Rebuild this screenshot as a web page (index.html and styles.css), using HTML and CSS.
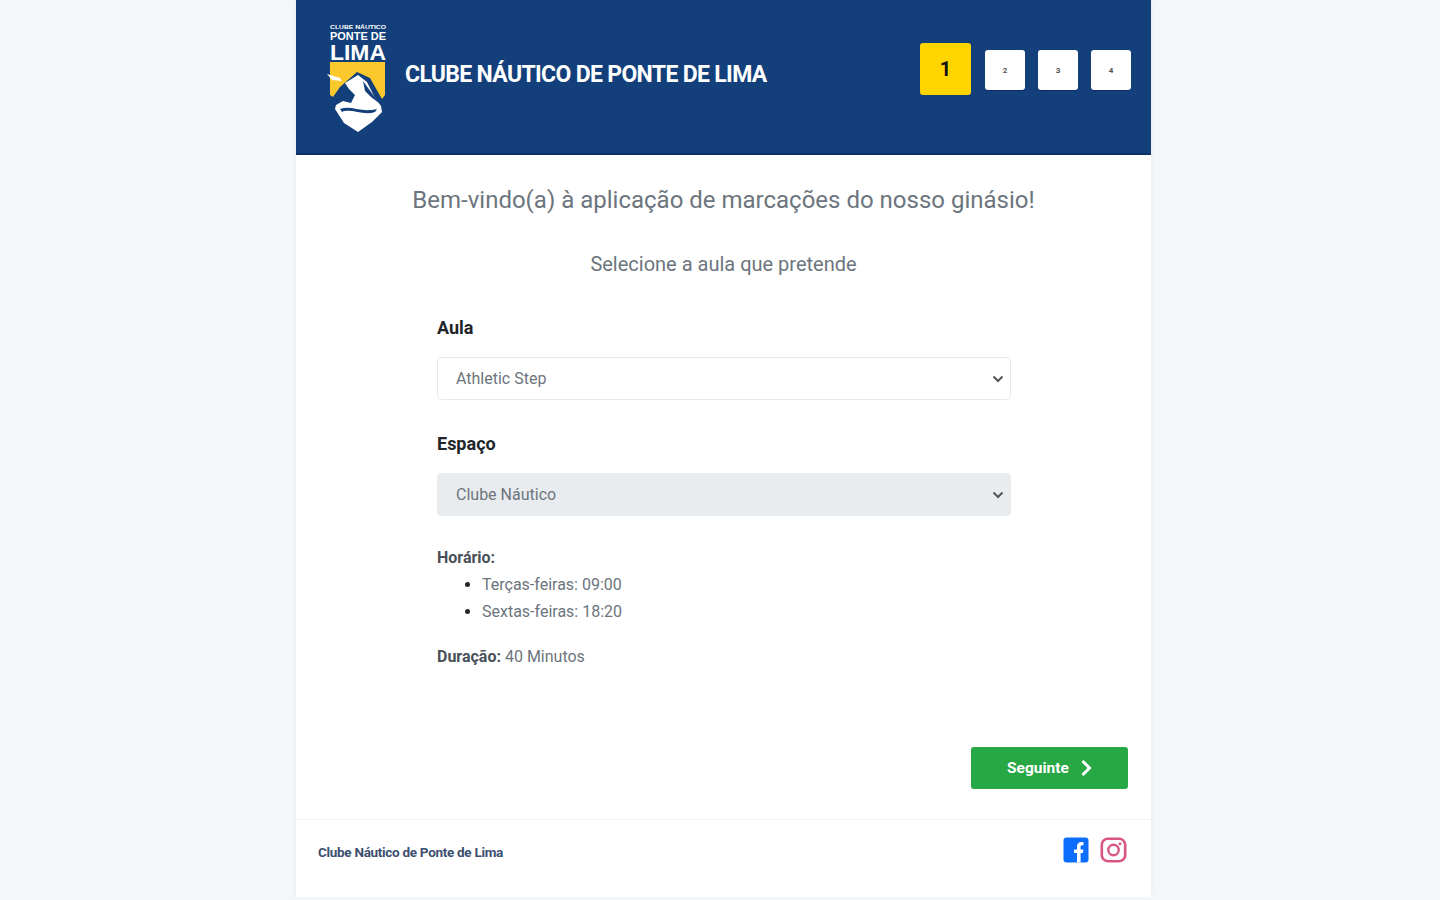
FILE: index.html
```html
<!DOCTYPE html>
<html lang="pt">
<head>
    <meta charset="UTF-8">
    <meta name="viewport" content="width=device-width, initial-scale=1.0">
    <title>Clube Náutico de Ponte de Lima</title>
    <link rel="stylesheet" href="styles.css">
</head>
<body>
    <div class="card">
        <header class="top">
            <div class="brand">
                <svg class="logo" width="64" height="112" viewBox="0 0 64 112">
                    <text x="31" y="8" class="logo-small" textLength="56" lengthAdjust="spacingAndGlyphs">CLUBE NÁUTICO</text>
                    <text x="31" y="19" class="logo-mid" textLength="56" lengthAdjust="spacingAndGlyphs">PONTE DE</text>
                    <text x="31" y="39" class="logo-big" textLength="56" lengthAdjust="spacingAndGlyphs">LIMA</text>
                    <path d="M3 41H58V74L55 78 43 57 30 51 13 66 6 76 3 74Z" fill="#fcc92c"/>
                    <path d="M0 53L13 57 15 60 5 59Z" fill="#fff"/>
                    <path d="M18 62L31 54 40 61 48 77 54 85 55 91 45 101 31 111 17 102 8 88 9 84 16 80 24 82 28 74 22 68Z" fill="#fff"/>
                    <path d="M36 60L44 71 52 82 44 76 38 70Z" fill="#133f7b"/>
                    <path d="M13 88C24 84 34 92 50 88L48 91C36 95 24 87 15 91Z" fill="#133f7b"/>
                </svg>
                <h1 class="club-name">CLUBE NÁUTICO DE PONTE DE LIMA</h1>
            </div>
            <div class="steps">
                <div class="step active">1</div>
                <div class="step">2</div>
                <div class="step">3</div>
                <div class="step">4</div>
            </div>
        </header>

        <main class="content">
            <h2 class="welcome">Bem-vindo(a) à aplicação de marcações do nosso ginásio!</h2>
            <p class="pick">Selecione a aula que pretende</p>

            <form class="booking">
                <label for="aula">Aula</label>
                <select id="aula">
                    <option>Athletic Step</option>
                </select>

                <label for="espaco">Espaço</label>
                <select id="espaco" disabled>
                    <option>Clube Náutico</option>
                </select>

                <div class="info">
                    <strong>Horário:</strong>
                    <ul>
                        <li>Terças-feiras: 09:00</li>
                        <li>Sextas-feiras: 18:20</li>
                    </ul>
                    <p><strong>Duração:</strong> 40 Minutos</p>
                </div>
            </form>

            <div class="actions">
                <button type="button" class="next">
                    Seguinte
                    <svg width="12" height="18" viewBox="0 0 12 18"><path d="M2.5 2L9.5 9 2.5 16" fill="none" stroke="#fff" stroke-width="3"/></svg>
                </button>
            </div>
        </main>

        <footer class="bottom">
            <span class="foot-name">Clube Náutico de Ponte de Lima</span>
            <div class="social">
                <svg width="26" height="26" viewBox="0 0 26 26">
                    <rect x="0.5" y="0.5" width="25" height="25" rx="3" fill="#0d6efd"/>
                    <path d="M14 25.5V16H11V12.5H14V9.5C14 6.5 16 5 18.2 5C19.4 5 20.5 5.2 20.5 5.2V8.2H19C17.8 8.2 17.6 9 17.6 9.8V12.5H20.4L19.9 16H17.6V25.5Z" fill="#fff"/>
                </svg>
                <svg width="27" height="26" viewBox="0 0 27 26">
                    <rect x="1.8" y="1.8" width="23.4" height="22.4" rx="6" fill="none" stroke="#d9567f" stroke-width="2.6"/>
                    <circle cx="13.5" cy="13" r="5.2" fill="none" stroke="#d9567f" stroke-width="2.4"/>
                    <circle cx="20" cy="6.8" r="1.5" fill="#d9567f"/>
                </svg>
            </div>
        </footer>
    </div>
</body>
</html>
```

FILE: styles.css
```css
body {
    margin: 0;
    background-color: #f4f7f9;
    font-family: Roboto, "Liberation Sans", sans-serif;
    color: #212529;
}
.card {
    width: 855px;
    height: 897px;
    margin: 0 0 0 296px;
    background-color: white;
    box-shadow: 0 0 3px rgba(0, 0, 0, 0.08);
    display: flex;
    flex-direction: column;
}
.top {
    height: 153px;
    flex: none;
    background-color: #133f7b;
    border-bottom: 2px solid #0c2f6b;
    display: flex;
    justify-content: space-between;
    padding: 0 20px 0 31px;
}
.brand {
    display: flex;
    align-items: center;
    gap: 14px;
}
.logo {
    margin-top: 21px;
    align-self: flex-start;
}
.logo text {
    fill: white;
    font-family: "Liberation Sans", sans-serif;
    font-weight: bold;
    text-anchor: middle;
}
.logo-small {
    font-size: 6px;
}
.logo-mid {
    font-size: 11px;
}
.logo-big {
    font-size: 22px;
}
.club-name {
    margin: 0 0 4px;
    font-size: 23px;
    font-weight: 700;
    letter-spacing: -0.67px;
    color: white;
}
.steps {
    display: flex;
    align-items: flex-start;
    gap: 13px;
    padding-top: 50px;
}
.step {
    width: 40px;
    height: 40px;
    background-color: white;
    border-radius: 3px;
    box-shadow: 0 1px 0 #0b2a78;
    color: #555;
    font-size: 8px;
    font-weight: 700;
    display: flex;
    align-items: center;
    justify-content: center;
}
.step.active {
    width: 51px;
    height: 52px;
    margin: -7px 1px 0 0;
    background-color: #ffd500;
    color: #111;
    font-size: 20px;
    box-shadow: none;
}
.content {
    flex: 1;
    padding: 0 23px;
    display: flex;
    flex-direction: column;
}
.welcome {
    margin: 30px 0 0;
    text-align: center;
    font-size: 24px;
    font-weight: 400;
    line-height: 30px;
    color: #6c757d;
}
.pick {
    margin: 35px 0 0;
    text-align: center;
    font-size: 20px;
    line-height: 28px;
    color: #6c757d;
}
.booking {
    width: 574px;
    margin: 37px 0 0 118px;
    display: flex;
    flex-direction: column;
}
label {
    font-size: 18px;
    font-weight: 700;
    line-height: 26px;
    margin-bottom: 16px;
}
select {
    appearance: none;
    height: 43px;
    padding: 0 18px;
    margin-bottom: 31px;
    border: 1px solid #e6e8eb;
    border-radius: 4px;
    background-color: white;
    background-image: url("data:image/svg+xml,%3Csvg xmlns='http://www.w3.org/2000/svg' viewBox='0 0 12 8'%3E%3Cpath d='M1.5 1.5L6 6l4.5-4.5' fill='none' stroke='%23555' stroke-width='2'/%3E%3C/svg%3E");
    background-repeat: no-repeat;
    background-position: right 6px center;
    background-size: 12px 8px;
    font-family: inherit;
    font-size: 16px;
    color: #6c757d;
    opacity: 1;
}
select:disabled {
    background-color: #e9ecef;
    border-color: #e9ecef;
    color: #6c757d;
}
.info {
    margin-top: -3px;
    font-size: 16px;
    line-height: 27px;
    color: #6c757d;
}
.info strong {
    color: #495057;
}
.info ul {
    margin: 0;
    padding-left: 45px;
}
.info li::marker {
    color: #212529;
}
.info p {
    margin: 18px 0 0;
}
.actions {
    margin-top: auto;
    display: flex;
    justify-content: flex-end;
    padding-bottom: 30px;
}
.next {
    width: 157px;
    height: 42px;
    background-color: #28a745;
    color: white;
    border: none;
    border-radius: 3px;
    font-family: inherit;
    font-size: 15.5px;
    font-weight: 700;
    display: flex;
    align-items: center;
    justify-content: center;
    gap: 11px;
    cursor: pointer;
}
.bottom {
    height: 77px;
    flex: none;
    border-top: 1px solid #f3f4f6;
    padding: 0 24px 0 22px;
    display: flex;
    justify-content: space-between;
    align-items: flex-start;
}
.foot-name {
    margin-top: 24px;
    font-size: 13.5px;
    font-weight: 700;
    letter-spacing: -0.3px;
    color: #3d4f70;
}
.social {
    margin-top: 17px;
    display: flex;
    gap: 11px;
}
```
